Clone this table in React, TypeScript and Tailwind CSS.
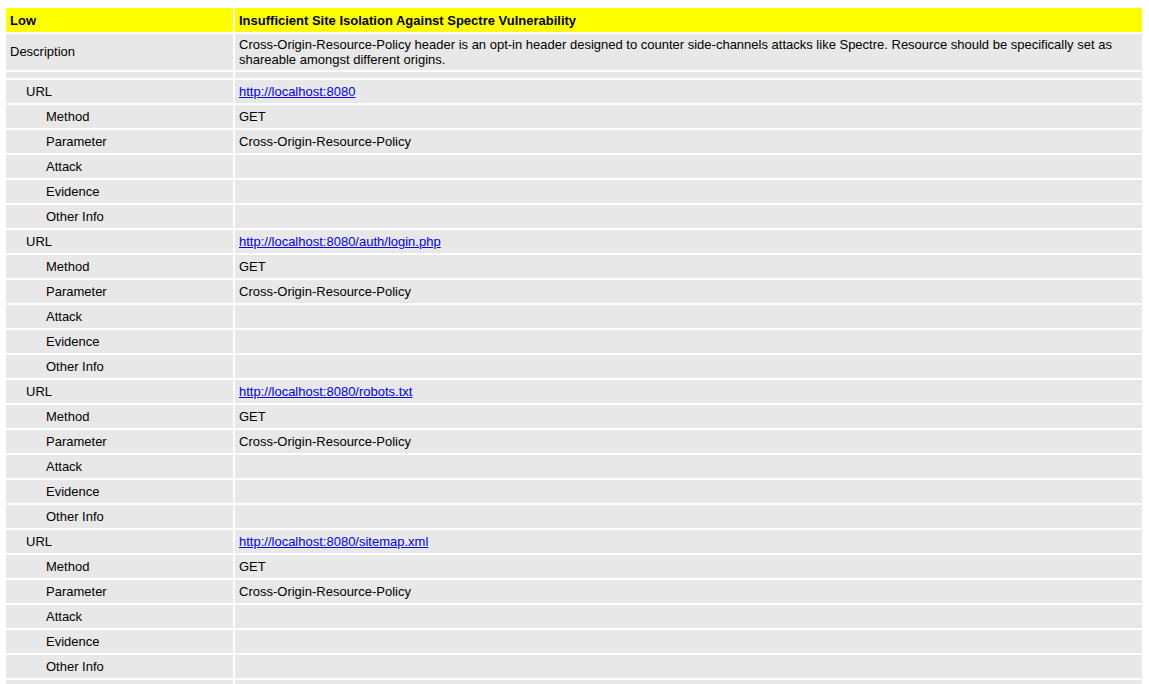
const urls = [
  "http://localhost:8080",
  "http://localhost:8080/auth/login.php",
  "http://localhost:8080/robots.txt",
  "http://localhost:8080/sitemap.xml",
];

const Cell = ({ children, className = "" }: { children?: React.ReactNode; className?: string }) => (
  <div className={`flex items-center bg-[#e8e8e8] ${className}`}>{children}</div>
);

export default function App() {
  return (
    <div className="bg-white pt-2 pl-[6px] pr-[7px] font-['Liberation_Sans',Arial,sans-serif] text-[13px] leading-[15px] text-black">
      <div className="grid grid-cols-[227px_1fr] gap-[2px]">
        <div className="flex h-6 items-center bg-[#ffff00] px-1 font-bold">Low</div>
        <div className="flex h-6 items-center bg-[#ffff00] px-1 font-bold">
          Insufficient Site Isolation Against Spectre Vulnerability
        </div>

        <Cell className="h-9 px-1 pb-px">Description</Cell>
        <Cell className="h-9 px-1">
          Cross-Origin-Resource-Policy header is an opt-in header designed to counter side-channels attacks like Spectre. Resource should be specifically set as shareable amongst different origins.
        </Cell>

        <Cell className="h-[6px]" />
        <Cell className="h-[6px]" />

        {urls.map((url) => (
          <div key={url} className="contents">
            <Cell className="h-[23px] pl-5">URL</Cell>
            <Cell className="h-[23px] px-1">
              <a href={url} className="text-[#0000ee] underline">{url}</a>
            </Cell>
            <Cell className="h-[23px] pl-10">Method</Cell>
            <Cell className="h-[23px] px-1">GET</Cell>
            <Cell className="h-[23px] pl-10">Parameter</Cell>
            <Cell className="h-[23px] px-1">Cross-Origin-Resource-Policy</Cell>
            <Cell className="h-[23px] pl-10">Attack</Cell>
            <Cell className="h-[23px] px-1" />
            <Cell className="h-[23px] pl-10">Evidence</Cell>
            <Cell className="h-[23px] px-1" />
            <Cell className="h-[23px] pl-10">Other Info</Cell>
            <Cell className="h-[23px] px-1" />
          </div>
        ))}

        <Cell className="h-[6px]" />
        <Cell className="h-[6px]" />
      </div>
    </div>
  );
}
